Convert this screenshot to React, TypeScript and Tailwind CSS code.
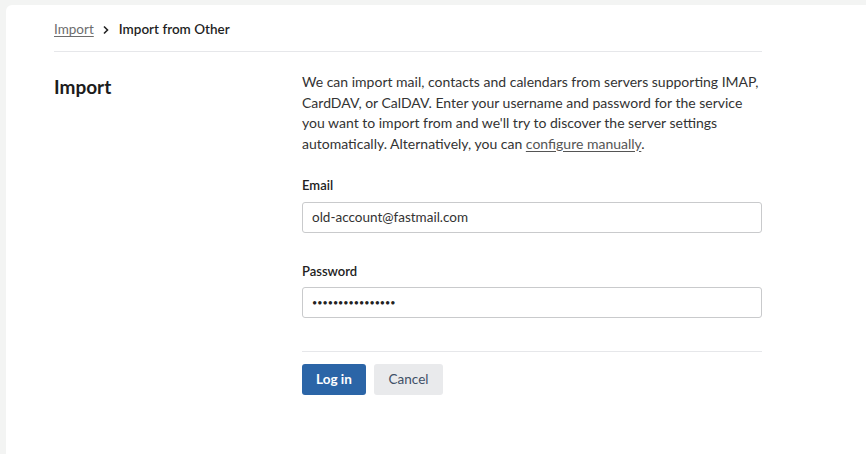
import React from 'react';

export default function App() {
  return (
    <div
      className="h-[454px] w-[866px] overflow-hidden bg-[#f3f4f3] pl-[6px] pt-[5px]"
      style={{ fontFamily: 'Lato, "Liberation Sans", sans-serif' }}
    >
      <div className="h-full rounded-tl-[6px] bg-white pl-[48px]">
        <div className="w-[708px]">
          {/* breadcrumb */}
          <div className="flex h-[47px] items-center border-b border-[#e6e7ea] pt-[3px] text-[13.5px]">
            <a className="text-[#6d6d6d] underline underline-offset-2">Import</a>
            <svg className="ml-[8px] mr-[9px]" width="8" height="10" viewBox="0 0 8 10" fill="none">
              <path d="M2 1.5L5.5 5L2 8.5" stroke="#222" strokeWidth="1.6" />
            </svg>
            <span className="font-semibold text-[#1f1f1f]">Import from Other</span>
          </div>

          <div className="flex pt-[20px]">
            <h1 className="w-[248px] shrink-0 pt-[1px] text-[19px] font-bold text-[#1c1c1c]">Import</h1>
            <div className="flex-1">
              <p className="text-[14px] leading-[20.5px] text-[#333]">
                We can import mail, contacts and calendars from servers supporting IMAP, CardDAV, or CalDAV. Enter
                your username and password for the service you want to import from and we'll try to discover the
                server settings automatically. Alternatively, you can{' '}
                <a className="text-[#555] underline underline-offset-2">configure manually</a>.
              </p>

              <label className="mt-[22px] block text-[13px] font-semibold text-[#222]">Email</label>
              <div className="mt-[6px] flex h-[31px] items-center rounded-[3px] border border-[#c9cacc] px-[9px] text-[13.5px] text-[#333]">
                old-account@fastmail.com
              </div>

              <label className="mt-[29px] block text-[13px] font-semibold text-[#222]">Password</label>
              <div className="mt-[6px] flex h-[31px] items-center rounded-[3px] border border-[#c9cacc] px-[9px] text-[9px] text-[#222]">
                ••••••••••••••••
              </div>

              <div className="mt-[33px] border-t border-[#e6e7ea] pt-[12px]">
                <div className="flex gap-[8px]">
                  <button className="h-[31px] w-[64px] rounded-[3px] bg-[#2b65a7] text-[13.5px] font-bold text-white">
                    Log in
                  </button>
                  <button className="h-[31px] w-[69px] rounded-[3px] bg-[#e9eaec] text-[13.5px] text-[#3f5067]">
                    Cancel
                  </button>
                </div>
              </div>
            </div>
          </div>
        </div>
      </div>
    </div>
  );
}
